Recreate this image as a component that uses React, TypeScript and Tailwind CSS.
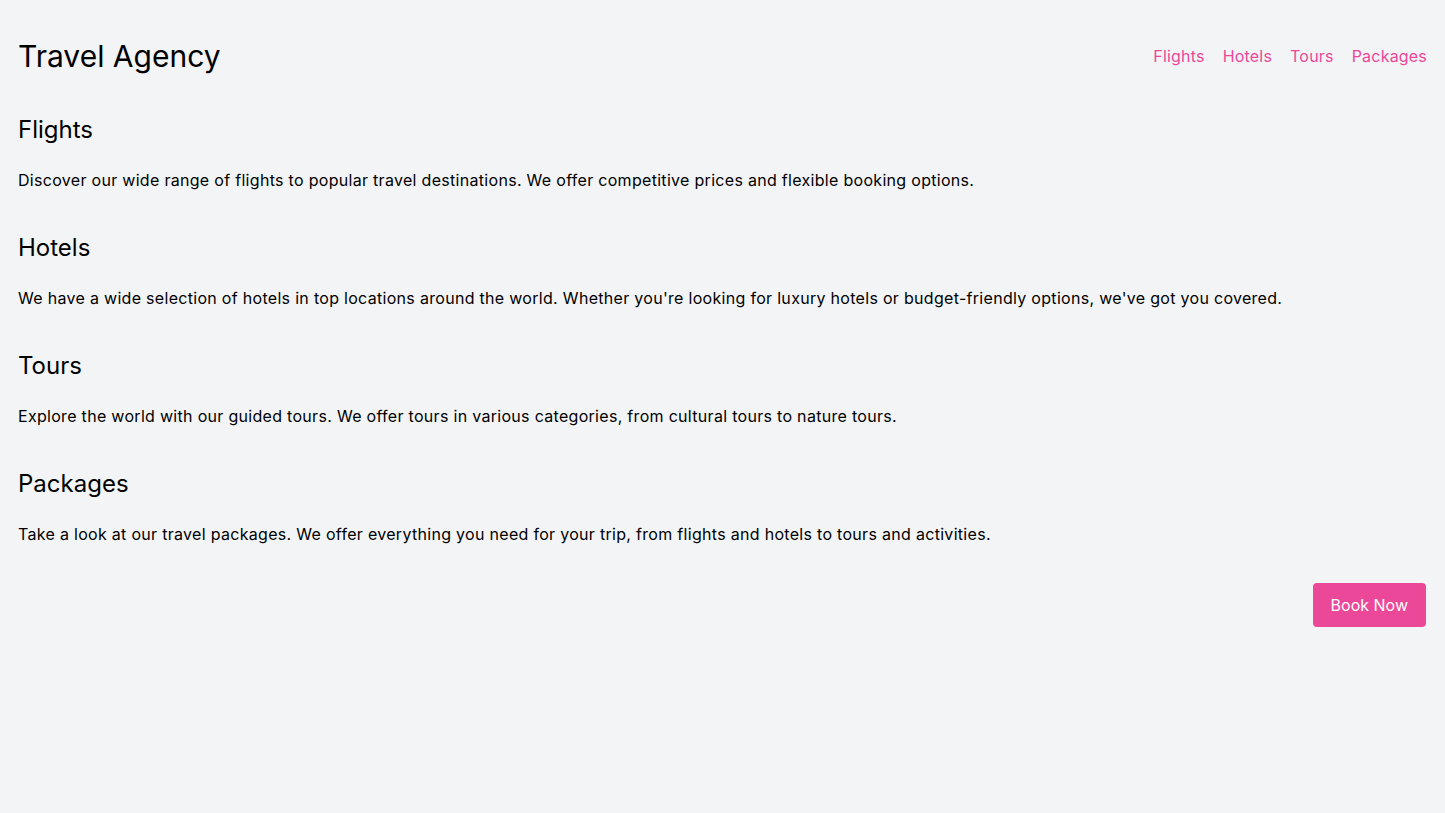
const sections = [
  {
    title: 'Flights',
    text: 'Discover our wide range of flights to popular travel destinations. We offer competitive prices and flexible booking options.',
  },
  {
    title: 'Hotels',
    text: "We have a wide selection of hotels in top locations around the world. Whether you're looking for luxury hotels or budget-friendly options, we've got you covered.",
  },
  {
    title: 'Tours',
    text: 'Explore the world with our guided tours. We offer tours in various categories, from cultural tours to nature tours.',
  },
  {
    title: 'Packages',
    text: 'Take a look at our travel packages. We offer everything you need for your trip, from flights and hotels to tours and activities.',
  },
]

export default function App() {
  return (
    <div className="min-h-screen bg-[#f3f4f6] font-['Inter',sans-serif] text-black">
      <div className="px-[18px] pt-[38px]">
        <header className="flex items-center justify-between">
          <h1 className="text-3xl font-normal">Travel Agency</h1>
          <nav className="flex gap-[18px] text-base tracking-[0.2px] text-[#ec4899]">
            <a href="#">Flights</a>
            <a href="#">Hotels</a>
            <a href="#">Tours</a>
            <a href="#">Packages</a>
          </nav>
        </header>

        <main className="mt-10 flex flex-col gap-10">
          {sections.map((s) => (
            <section key={s.title}>
              <h2 className="mb-[22px] text-2xl font-normal">{s.title}</h2>
              <p className="text-base tracking-[0.3px]">{s.text}</p>
            </section>
          ))}
        </main>

        <div className="mt-[37px] flex justify-end">
          <button className="mr-[1px] h-[44px] rounded bg-[#ec4899] px-[18px] text-base text-white">
            Book Now
          </button>
        </div>
      </div>
    </div>
  )
}
